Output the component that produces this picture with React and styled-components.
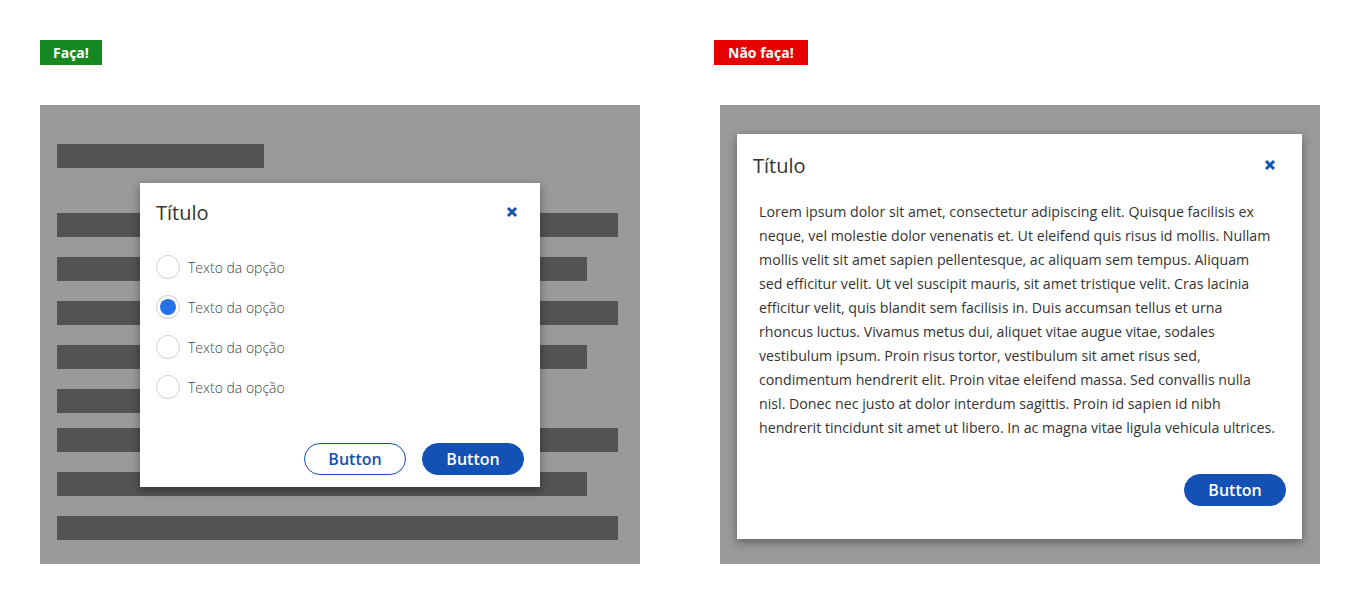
import React from "react";
import styled, { createGlobalStyle } from "styled-components";

const GlobalStyle = createGlobalStyle`
  html, body {
    margin: 0;
    padding: 0;
    background: #fff;
  }
  body {
    font-family: "Open Sans", "Liberation Sans", sans-serif;
    color: #333;
  }
`;

const BLUE = "#1351b4";

const Page = styled.div`
  display: flex;
  gap: 80px;
  padding: 40px;
`;

const Column = styled.div`
  display: flex;
  flex-direction: column;
  align-items: flex-start;
  width: 600px;
`;

const Badge = styled.div`
  height: 25px;
  line-height: 25px;
  padding: 0 ${({ tone }) => (tone === "bad" ? 14 : 13)}px;
  margin-left: ${({ shift }) => shift || 0}px;
  margin-bottom: 40px;
  background: ${({ tone }) => (tone === "bad" ? "#e60000" : "#168821")};
  color: #fff;
  font-size: 14px;
  font-weight: 700;
`;

const Backdrop = styled.div`
  position: relative;
  box-sizing: border-box;
  width: 600px;
  height: 459px;
  background: #9a9a9a;
`;

const BarList = styled.div`
  display: flex;
  flex-direction: column;
  padding: 0 17px;
`;

const Bar = styled.div`
  height: 24px;
  width: ${({ w }) => w}px;
  margin-top: ${({ mt }) => mt}px;
  background: #535353;
`;

const Dialog = styled.div`
  background: #fff;
  box-shadow: 0 3px 9px rgba(0, 0, 0, 0.4);
  display: flex;
  flex-direction: column;
`;

const FloatingDialog = styled(Dialog)`
  position: absolute;
  left: 100px;
  top: 78px;
  width: 400px;
  height: 304px;
`;

const FullDialog = styled(Dialog)`
  margin: 29px 18px 25px 17px;
  height: 405px;
`;

const Header = styled.div`
  display: flex;
  align-items: center;
  justify-content: space-between;
  padding: 0 ${({ pr }) => pr}px 0 16px;
  height: ${({ h }) => h}px;
`;

const Title = styled.h2`
  margin: 0;
  font-size: 20px;
  font-weight: 400;
  color: #333;
`;

const Close = styled.button`
  border: 0;
  background: none;
  padding: 0;
  width: 16px;
  height: 16px;
  display: flex;
  align-items: center;
  justify-content: center;
`;

const Options = styled.div`
  display: flex;
  flex-direction: column;
  gap: 16px;
  padding: 14px 16px 0;
`;

const Option = styled.label`
  display: flex;
  align-items: center;
  gap: 8px;
  font-size: 14px;
  font-weight: 300;
  color: #444;
`;

const Radio = styled.span`
  box-sizing: border-box;
  width: 24px;
  height: 24px;
  border-radius: 50%;
  border: 1px solid #cfcfcf;
  display: flex;
  align-items: center;
  justify-content: center;
  &::after {
    content: "";
    width: 16px;
    height: 16px;
    border-radius: 50%;
    background: ${({ checked }) => (checked ? "#2670e8" : "transparent")};
  }
`;

const Footer = styled.div`
  margin-top: auto;
  display: flex;
  justify-content: flex-end;
  gap: 16px;
  padding: 0 16px ${({ pb }) => pb}px;
`;

const Button = styled.button`
  box-sizing: border-box;
  width: 102px;
  height: 32px;
  border-radius: 16px;
  border: 1px solid ${BLUE};
  background: ${({ primary }) => (primary ? BLUE : "#fff")};
  color: ${({ primary }) => (primary ? "#fff" : BLUE)};
  font-family: inherit;
  font-size: 16px;
  font-weight: 600;
  padding: 0;
`;

const Body = styled.div`
  padding: 4px 22px 0;
  font-size: 14.2px;
  line-height: 24px;
  color: #333;
`;

const Line = styled.span`
  display: block;
  white-space: nowrap;
`;

const bars = [
  { w: 207, mt: 39 },
  { w: 561, mt: 45 },
  { w: 530, mt: 20 },
  { w: 561, mt: 20 },
  { w: 530, mt: 20 },
  { w: 340, mt: 20 },
  { w: 561, mt: 15 },
  { w: 530, mt: 20 },
  { w: 561, mt: 20 },
];

const lorem = [
  "Lorem ipsum dolor sit amet, consectetur adipiscing elit. Quisque facilisis ex",
  "neque, vel molestie dolor venenatis et. Ut eleifend quis risus id mollis. Nullam",
  "mollis velit sit amet sapien pellentesque, ac aliquam sem tempus. Aliquam",
  "sed efficitur velit. Ut vel suscipit mauris, sit amet tristique velit. Cras lacinia",
  "efficitur velit, quis blandit sem facilisis in. Duis accumsan tellus et urna",
  "rhoncus luctus. Vivamus metus dui, aliquet vitae augue vitae, sodales",
  "vestibulum ipsum. Proin risus tortor, vestibulum sit amet risus sed,",
  "condimentum hendrerit elit. Proin vitae eleifend massa. Sed convallis nulla",
  "nisl. Donec nec justo at dolor interdum sagittis. Proin id sapien id nibh",
  "hendrerit tincidunt sit amet ut libero. In ac magna vitae ligula vehicula ultrices.",
];

function CloseIcon() {
  return (
    <svg width="12" height="12" viewBox="0 0 12 12">
      <path d="M2 2L10 10M10 2L2 10" stroke={BLUE} strokeWidth="3" strokeLinecap="butt" />
    </svg>
  );
}

export default function App() {
  return (
    <>
      <GlobalStyle />
      <Page>
        <Column>
          <Badge tone="good">Faça!</Badge>
          <Backdrop>
            <BarList>
              {bars.map((b, i) => (
                <Bar key={i} w={b.w} mt={b.mt} />
              ))}
            </BarList>
            <FloatingDialog>
              <Header h={58} pr={20}>
                <Title>Título</Title>
                <Close aria-label="Fechar"><CloseIcon /></Close>
              </Header>
              <Options>
                {[false, true, false, false].map((checked, i) => (
                  <Option key={i}>
                    <Radio checked={checked} />
                    Texto da opção
                  </Option>
                ))}
              </Options>
              <Footer pb={12}>
                <Button>Button</Button>
                <Button primary>Button</Button>
              </Footer>
            </FloatingDialog>
          </Backdrop>
        </Column>
        <Column>
          <Badge tone="bad" shift={-6}>Não faça!</Badge>
          <Backdrop>
            <FullDialog>
              <Header h={62} pr={24}>
                <Title>Título</Title>
                <Close aria-label="Fechar"><CloseIcon /></Close>
              </Header>
              <Body>
                {lorem.map((l, i) => (
                  <Line key={i}>{l}</Line>
                ))}
              </Body>
              <Footer pb={33}>
                <Button primary>Button</Button>
              </Footer>
            </FullDialog>
          </Backdrop>
        </Column>
      </Page>
    </>
  );
}
